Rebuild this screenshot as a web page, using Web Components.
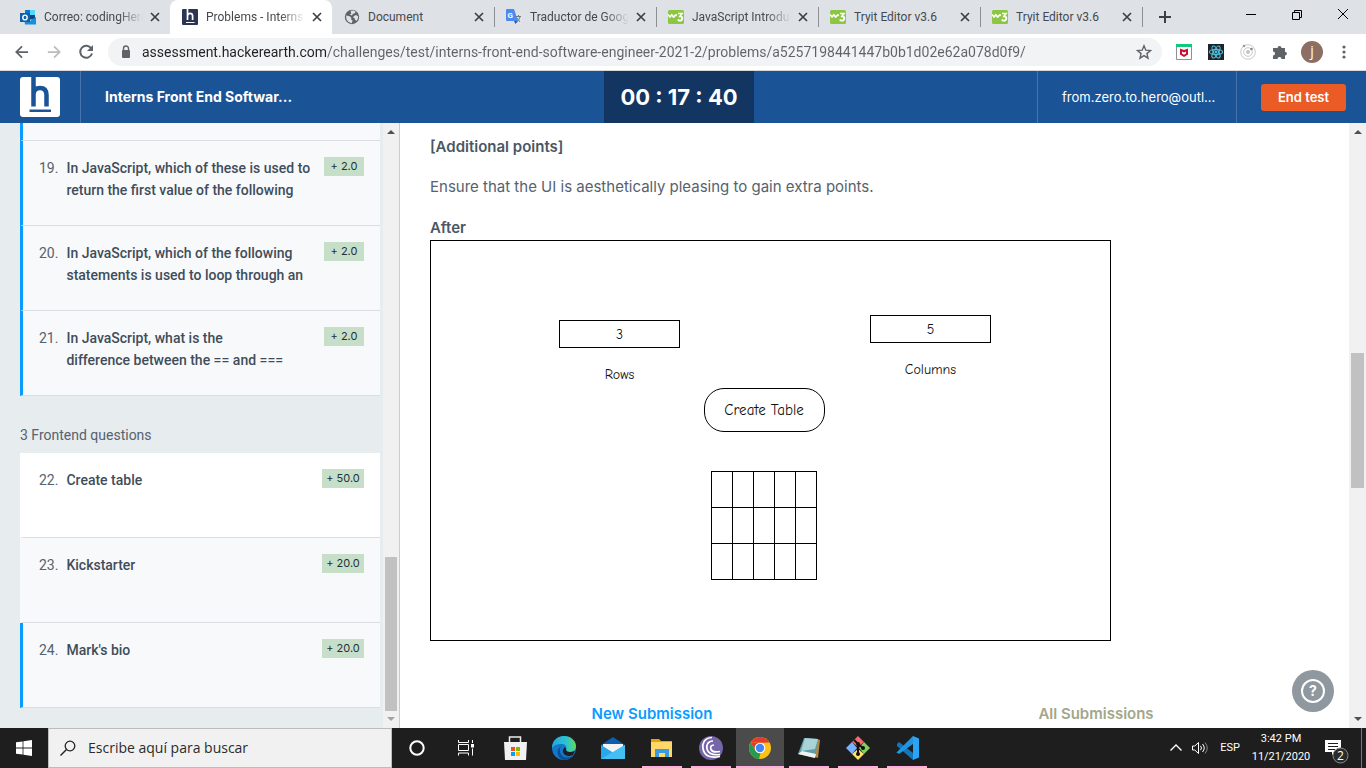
<!DOCTYPE html>
<html lang="en">
<head>
<meta charset="utf-8">
<title>Problems - Interns Front End Software Engineer</title>
<style>
  html, body { margin: 0; height: 100%; }
  body {
    --ui: "Open Sans", sans-serif;
    --chrome: Roboto, sans-serif;
    --page: Inter, sans-serif;
    --hand: "Comic Sans MS", "Comic Neue", "Open Sans", sans-serif;
    font-family: var(--ui);
    overflow: hidden;
  }
</style>
</head>
<body>
<desktop-screen></desktop-screen>

<script>
const define = (name, html, setup) => {
  const template = document.createElement('template');
  template.innerHTML = html;
  customElements.define(name, class extends HTMLElement {
    constructor() {
      super();
      this.attachShadow({ mode: 'open' }).append(template.content.cloneNode(true));
    }
    connectedCallback() { if (setup) setup(this, this.shadowRoot); }
  });
};

const ICONS = {
  outlook: [16, '<path fill="#28a8ea" d="M5 1h10v10H5z"/><path fill="#0078d4" d="M5 1h5v5H5z"/><path fill="#50d9ff" d="M10 1h5v5h-5z"/><path fill="#14447d" d="M10 6h5v4h-5z"/><path fill="#1490df" d="M4 9l6 3 6-4v7.500H5z"/><path fill="#0f5fa8" d="M0 4h10v9H0z"/><ellipse cx="5" cy="8.500" rx="2.200" ry="2.400" fill="none" stroke="#fff" stroke-width="1.400"/>'],
  hmark: [16, '<path fill="#2c3454" d="M1 0h14a1 1 0 0 1 1 1v14a1 1 0 0 1-1 1H1a1 1 0 0 1-1-1V1a1 1 0 0 1 1-1z"/><path fill="none" stroke="#fff" stroke-width="1.700" d="M5.500 0v11M5.500 6.500Q6 4.300 8.200 4.300t2.400 2.500V11"/><path fill="#fff" d="M4 13h8.500v1H4z"/>'],
  globe: [16, '<circle cx="8" cy="8" r="7.200" fill="#5f6368"/><path fill="#dee1e6" d="M2.200 6.500l3.500.800 1.800 1.700-.6 1.300 1.700 1.300-.8 2.600Q3 13.500 2.200 9zM6.500 1.800l3-.2 2 1-.5 1.700-2 .5-1 1.700-2-.8 1.300-1.500zM10 7l2-.900 2.200 1.200q.1 2.500-1.600 4.400L11 11l-.3-1.700L9 8.500z"/>'],
  translate: [16, '<path fill="#e1e3e6" d="M7 4h8q1 0 1 1v10H9z"/><path fill="#4a8af4" d="M1 0h7l4 12H1q-1 0-1-1V1q0-1 1-1z"/><path fill="#2255b8" d="M8 12h4l-2.500 3z"/><text x="1.500" y="9" font-family="Roboto" font-weight="700" font-size="8" fill="#fff">G</text><path fill="none" stroke="#667c89" d="M10 7.500h5M12.500 6v1.500M14 8q-1 3-3 4.500M11 9l3 4"/>'],
  w3: [16, '<rect width="16" height="14" y="1" rx="1.500" fill="#8cc643"/><path fill="none" stroke="#fff" stroke-width="1.700" d="M0 5.500l2 2.500 1.800-2.200L5.500 8l2.200-2L9 6.500M10 4.500h4l-2 2.800q2.500 0 2.300 2.200-.4 2.300-2.700 2.200-1.200-.1-1.800-1.200"/>'],
  close: [16, '<path stroke="#3c4043" stroke-width="1.700" d="M4 4l8 8M12 4l-8 8"/>'],
  plus: [16, '<path stroke="#3c4043" stroke-width="2" d="M8 2v12M2 8h12"/>'],
  min: [16, '<path stroke="#000" d="M3 5.500h10"/>'],
  max: [16, '<path fill="none" stroke="#000" d="M3.500 3.500h7v7h-7zM5.500 3.500v-2h7v7h-2"/>'],
  winclose: [16, '<path stroke="#000" d="M3 0l10 10M13 0L3 10"/>'],
  back: [16, '<path fill="none" stroke="#5f6368" stroke-width="2" d="M15 8H2M8 1.500L1.500 8 8 14.500"/>'],
  forward: [16, '<path fill="none" stroke="#babcbe" stroke-width="2" d="M1 8h13M8 1.500L14.500 8 8 14.500"/>'],
  reload: [16, '<path fill="none" stroke="#5f6368" stroke-width="2" d="M13.300 4.500A6 6 0 1 0 14 9.500"/><path fill="#5f6368" d="M15 1v6H9z"/>'],
  lock: [16, '<rect x="4" y="6" width="8" height="8" rx="1" fill="#5f6368"/><path fill="none" stroke="#5f6368" stroke-width="1.400" d="M5.500 7V4.500a2.500 2.500 0 0 1 5 0V7"/>'],
  star: [16, '<path fill="none" stroke="#5f6368" stroke-width="1.400" d="M8 1.800l1.800 4.400 4.700.4-3.600 3 1.100 4.600L8 11.700l-4 2.500 1.100-4.600-3.600-3 4.700-.4z"/>'],
  mcafee: [16, '<path fill="#fff" stroke="#8d9095" d="M.5.500h15v15H.5z"/><path fill="#12c97b" d="M0 0h16v3H0z"/><path fill="#c8102e" d="M4 4.500l4 1.600 4-1.600v6L8 13l-4-2.500z"/><path fill="#fff" d="M6 7.500l2 .9 2-.9v2L8 10.800 6 9.500z"/>'],
  react: [16, '<path fill="#20232a" d="M0 0h16v16H0z"/><g fill="none" stroke="#53c1de" stroke-width="1.100"><ellipse cx="8" cy="8" rx="6.600" ry="2.500"/><ellipse cx="8" cy="8" rx="6.600" ry="2.500" transform="rotate(60 8 8)"/><ellipse cx="8" cy="8" rx="6.600" ry="2.500" transform="rotate(120 8 8)"/></g><circle cx="8" cy="8" r="1.400" fill="#53c1de"/>'],
  orbit: [16, '<circle cx="8" cy="8" r="7.300" fill="none" stroke="#c9c9c9"/><circle cx="8" cy="8" r="4.300" fill="none" stroke="#c9c9c9"/><circle cx="8" cy="8" r="2" fill="#c4c4c4"/><circle cx="11.500" cy="5" r="1.300" fill="#888"/><circle cx="4" cy="2" r="1.300" fill="#999"/>'],
  puzzle: [16, '<path fill="#5f6368" d="M1 4h4.500a2 2 0 1 1 4 0H13v3.700a1.900 1.900 0 1 1 0 3.800V15H9.500a2 2 0 0 0-4 0H1v-3.500a2 2 0 0 0 0-4z"/>'],
  dots: [16, '<g fill="#5f6368"><circle cx="8" cy="3" r="1.600"/><circle cx="8" cy="8" r="1.600"/><circle cx="8" cy="13" r="1.600"/></g>'],
  logo: [40, '<rect width="40" height="40" rx="3" fill="#fff"/><path fill="none" stroke="#1b5397" stroke-width="4.500" d="M13.500 0v29.500M13.500 17Q14 11 20 11q6.500 0 6.500 7v11.500"/><path fill="#1b5397" d="M9.500 32.500h21.500v2.500h-21.500z"/>'],
  windows: [16, '<path fill="#fff" d="M0 2.300l6.600-.9v6.200H0zM7.400 1.300L16 0v7.600H7.400zM0 8.400h6.600v6.200L0 13.700zM7.400 8.400H16V16l-8.600-1.300z"/>'],
  search: [16, '<circle cx="10" cy="6" r="4.800" fill="none" stroke="#222" stroke-width="1.300"/><path stroke="#222" stroke-width="1.400" d="M6.500 9.500L.500 15.500"/>'],
  cortana: [16, '<circle cx="8" cy="8" r="6.700" fill="none" stroke="#fff" stroke-width="2"/>'],
  taskview: [16, '<path fill="none" stroke="#fff" d="M.5 0v2.500h10V0M.5 15.500V13h10v2.500M.5 4.500h10v6H.5zM14.500 0v3M14.500 8.500v7"/><path fill="#fff" d="M13 4h3v3.500h-3z"/>'],
  store: [24, '<path fill="none" stroke="#ececec" stroke-width="1.500" d="M6.500 6.500V1h11v5.500"/><path fill="#f1f1f1" d="M1 6h23l-1 18H2z"/><path fill="#f25022" d="M8 11h4v4H8z"/><path fill="#7fba00" d="M13 11h4v4h-4z"/><path fill="#00a4ef" d="M8 16h4v4H8z"/><path fill="#ffb900" d="M13 16h4v4h-4z"/>'],
  edge: [24, '<defs><linearGradient id="e"><stop stop-color="#1fa9e0"/><stop offset=".6" stop-color="#2cc5cf"/><stop offset="1" stop-color="#63d85a"/></linearGradient></defs><circle cx="12" cy="12" r="12" fill="#1577c7"/><path fill="url(#e)" d="M0 10.500C1 4 6 0 12 0c7 0 12 5 12 10 0 4-3 6-6.500 6-3 0-4-1-3.500-2 1.500-2.500 0-5.500-3.500-6C6 7.500 2 9 0 12z"/><path fill="#0d4f96" d="M8 12q-1 5 2.500 8t10 0Q17 24 12 24 5 22 5.500 15.500 6 12.500 9 10z"/><path fill="#1e1e1e" d="M14 14q1.500 3.500 9 1l-2 4q-6 2.500-9-1-2.500-3 .5-6.500 2 0 1.500 2.500z"/>'],
  mail: [24, '<path fill="#0a5fae" d="M0 9l12-8 12 8v4H0z"/><path fill="#f4f4f4" d="M2 8h20v9H2z"/><path fill="#28a8ea" d="M0 9l12 7.500L24 9v14H0z"/><path fill="#43bff3" d="M0 23l17-10 7-4v14z"/>'],
  folder: [24, '<path fill="#e5a50a" d="M1 3h8l2 2h11v4H1z"/><path fill="#ffd867" d="M1 6h21v15H1z"/><path fill="#3b9be0" d="M5 13h14v8h-4v-4H9v4H5z"/>'],
  torrent: [24, '<circle cx="12" cy="12" r="12" fill="#7565a9"/><g fill="none" stroke="#fff" stroke-width="1.700"><path d="M13 1.500C5 2 3 8 4 12.500 5 19 10 22.500 21 20.500"/><path d="M14 5C9 5 7 9 8 13c1 4 5 6.500 13 5.500"/><path d="M15 9c-3 0-4 2-3 4.500 1 2 4 3 9 2"/></g>'],
  chrome: [24, '<circle cx="12" cy="12" r="11" fill="#fbc116"/><path fill="#e33b2e" d="M2.500 6.500A11 11 0 0 1 21.500 6.500H12z"/><path fill="#e33b2e" d="M2.500 6.500h19.300L12 7 8 15z"/><path fill="#269b4c" d="M2.500 6.500L8 15l4.500 2L11 23A11 11 0 0 1 2.500 6.500z"/><circle cx="12" cy="12" r="5.300" fill="#fff"/><circle cx="12" cy="12" r="4.200" fill="#4285f4"/>'],
  notepad: [24, '<path fill="#b08a4c" d="M20 3l3 1-2 18-3-1z"/><path fill="#5c9fa9" d="M7 2l14 1-3 19-17-4z"/><path fill="#a9d3d6" d="M8 2l13 1-3 10-14 2z"/><path fill="#f2f2ee" d="M1 18l4-3 14 3-1 4z"/>'],
  git: [24, '<path fill="#f3696c" d="M12 0l6 6-6 5-6-5z"/><path fill="#79b0ff" d="M6 6l5 6-5 6-6-6z"/><path fill="#80d25b" d="M18 6l6 6-6 6-5-6z"/><path fill="#ffe16b" d="M12 13l6 5-6 6-6-6z"/><path fill="none" stroke="#111" stroke-width="2" d="M8 4l4 4v10M12 8l5 4"/><g fill="#111"><circle cx="12" cy="8" r="2"/><circle cx="12" cy="18" r="2"/><circle cx="17" cy="12" r="2"/></g>'],
  code: [24, '<path fill="#0f77c0" d="M2 8l2-2 14 11v7L2 10z"/><path fill="#2196e0" d="M2 16L18 0v8L4 18l-3-2z"/><path fill="#2aa5f5" d="M18 0l6 2.500v19L18 24z"/>'],
  chevron: [16, '<path fill="none" stroke="#fff" stroke-width="1.400" d="M2.500 10.500L8 5l5.500 5.500"/>'],
  volume: [16, '<path fill="none" stroke="#fff" d="M.5 6h2.300L6.500 2.500v11L2.800 10H.5zM8.500 5.800q2 2.200 0 4.400M10.500 4q3.500 4 0 8"/><path fill="none" stroke="#888" d="M13 2.500q4.500 5.500 0 11"/>'],
  notes: [32, '<path fill="#fff" d="M0 8h16v12h-6l-3 3v-3H0z"/><path stroke="#1e1e1e" d="M3 11.500h10M3 14.500h10M3 17.500h7"/><circle cx="15.500" cy="23.500" r="7.500" fill="#2b2b2b" stroke="#8a8a8a"/><text x="15.500" y="28" text-anchor="middle" font-family="Open Sans" font-size="12" fill="#fff">2</text>'],
  help: [24, '<circle cx="12" cy="12" r="11" fill="none" stroke="#fff" stroke-width="2"/><text x="12" y="17" text-anchor="middle" font-family="Inter" font-weight="700" font-size="14" fill="#fff">?</text>']
};

define('app-icon', `<style>:host{display:block;flex:none}svg{display:block;width:100%;height:100%}</style>`, (el, root) => {
  const [size, art] = ICONS[el.getAttribute('name')];
  const width = (el.getAttribute('size') || size) + 'px';
  el.style.width = el.style.height = width;
  root.querySelector('svg')?.remove();
  root.innerHTML += `<svg viewBox="0 0 ${size} ${size}" aria-hidden="true">${art}</svg>`;
});

define('browser-tab', `
<style>
  :host { display: flex; align-items: center; flex: 0 1 162px; min-width: 0; box-sizing: border-box; height: 34px; padding: 0 7px 0 12px; color: #45494d; font: 12px/16px var(--chrome); position: relative; }
  :host([divided])::after { content: ""; position: absolute; right: -1px; top: 7px; width: 1px; height: 20px; background: #8b8e93; }
  :host([active]) { background: #fff; border-radius: 8px 8px 0 0; }
  .title { flex: 1; min-width: 0; margin: 0 4px 0 8px; overflow: hidden; white-space: nowrap; }
  :host([long]) .title { -webkit-mask-image: linear-gradient(90deg, #000 75%, transparent); mask-image: linear-gradient(90deg, #000 75%, transparent); }
  button { border: 0; padding: 0; background: none; }
</style>
<slot name="icon"></slot><span class="title"><slot></slot></span>
<button aria-label="Close tab"><app-icon name="close"></app-icon></button>`);

define('tab-strip', `
<style>
  :host { display: flex; align-items: center; height: 34px; background: #dee1e6; padding-left: 8px; }
  nav { display: flex; flex: 1; min-width: 0; align-items: center; }
  button { border: 0; padding: 0; background: none; display: grid; place-items: center; height: 28px; width: 46px; }
</style>
<nav>
  <browser-tab long><app-icon slot="icon" name="outlook"></app-icon>Correo: codingHero</browser-tab>
  <browser-tab active long><app-icon slot="icon" name="hmark"></app-icon>Problems - Interns</browser-tab>
  <browser-tab divided><app-icon slot="icon" name="globe"></app-icon>Document</browser-tab>
  <browser-tab divided long><app-icon slot="icon" name="translate"></app-icon>Traductor de Goog</browser-tab>
  <browser-tab divided long><app-icon slot="icon" name="w3"></app-icon>JavaScript Introduc</browser-tab>
  <browser-tab divided><app-icon slot="icon" name="w3"></app-icon>Tryit Editor v3.6</browser-tab>
  <browser-tab divided><app-icon slot="icon" name="w3"></app-icon>Tryit Editor v3.6</browser-tab>
  <button aria-label="New tab"><app-icon name="plus"></app-icon></button>
</nav>
<button aria-label="Minimize"><app-icon name="min"></app-icon></button>
<button aria-label="Restore"><app-icon name="max"></app-icon></button>
<button aria-label="Close"><app-icon name="winclose"></app-icon></button>`);

define('browser-toolbar', `
<style>
  :host { display: flex; align-items: center; height: 36px; background: #fff; padding: 0 6px; border-bottom: 1px solid #d5d7da; }
  button { border: 0; padding: 0; background: none; width: 32px; height: 28px; display: grid; place-items: center; }
  form { flex: 1; min-width: 0; display: flex; align-items: center; height: 28px; margin: 0 6px; border-radius: 14px; background: #f1f3f4; padding-left: 10px; }
  input { flex: 1; min-width: 0; border: 0; outline: 0; padding: 0; margin-left: 8px; font: 14px/20px var(--chrome);
    color: transparent; background: linear-gradient(90deg, #202124 184px, #5f6368 184px); -webkit-background-clip: text; background-clip: text; }
  form button { width: 36px; }
  .avatar { width: 22px; height: 22px; border-radius: 50%; background: #8d6e63; color: #fff; font: 14px/20px var(--ui); text-align: center; }
</style>
<button aria-label="Back"><app-icon name="back" size="14"></app-icon></button>
<button aria-label="Forward"><app-icon name="forward" size="14"></app-icon></button>
<button aria-label="Reload"><app-icon name="reload"></app-icon></button>
<form>
  <app-icon name="lock"></app-icon>
  <input aria-label="Address" value="assessment.hackerearth.com/challenges/test/interns-front-end-software-engineer-2021-2/problems/a5257198441447b0b1d02e62a078d0f9/">
  <button type="button" aria-label="Bookmark"><app-icon name="star"></app-icon></button>
</form>
<button aria-label="McAfee"><app-icon name="mcafee"></app-icon></button>
<button aria-label="React tools"><app-icon name="react"></app-icon></button>
<button aria-label="Orbit"><app-icon name="orbit"></app-icon></button>
<button aria-label="Extensions"><app-icon name="puzzle"></app-icon></button>
<button aria-label="Profile"><span class="avatar">j</span></button>
<button aria-label="Menu"><app-icon name="dots"></app-icon></button>`);

define('test-header', `
<style>
  :host { display: grid; grid-template-columns: calc(50% - 79px) 150px 1fr; height: 52px; background: #1b5397; color: #fff; font-family: var(--page); }
  .brand, .account { display: flex; align-items: center; }
  .logo { padding: 0 20px; height: 52px; display: flex; align-items: center; border-right: 1px solid #4673ac; }
  h1 { margin: 0 0 0 24px; font-size: 14px; line-height: 20px; font-weight: 700; }
  time { background: #123562; text-align: center; font-size: 22px; line-height: 52px; font-weight: 700; }
  .account { justify-content: flex-end; }
  .mail { box-sizing: border-box; width: 200px; border: solid #4673ac; border-width: 0 1px; padding-left: 24px; font-size: 13px; line-height: 52px; }
  button { margin: 0 20px 0 24px; width: 85px; height: 27px; border: 0; border-radius: 3px; padding: 0; background: #ea5b25; color: #fff; font: 600 13px/20px var(--page); }
</style>
<div class="brand"><div class="logo"><app-icon name="logo"></app-icon></div><h1>Interns Front End Softwar...</h1></div>
<time>00 : 17 : 40</time>
<div class="account"><span class="mail">from.zero.to.hero@outl...</span><button>End test</button></div>`);

define('scroll-rail', `
<style>
  :host { display: flex; flex-direction: column; align-items: center; width: 17px; flex: none; background: #f1f1f1; }
  i { border: 4px solid transparent; flex: none; }
  .up { border-top: 0; border-bottom-color: #505050; margin: 7px 0 6px; }
  .down { border-bottom: 0; border-top-color: #505050; margin: 6px 0 7px; }
  :host([end]) .down { border-top-color: #a3a3a3; }
  .track { flex: 1; align-self: stretch; display: flex; flex-direction: column; padding: 0 2px; }
  .before { flex: var(--before) 0 0; }
  .thumb { flex: var(--thumb) 0 0; background: #c1c1c1; }
  .after { flex: var(--after) 0 0; }
</style>
<i class="up"></i><div class="track"><div class="before"></div><div class="thumb"></div><div class="after"></div></div><i class="down"></i>`);

define('question-item', `
<style>
  :host { display: flex; align-items: flex-start; box-sizing: border-box; height: 85px; padding: 16px 16px 0; background: #f8f9fb; border: solid #dbdee0; border-width: 0 0 1px 3px; border-left-color: #f8f9fb; color: #3f4d5a; font-size: 14px; line-height: 22px; }
  :host([done]) { border-left-color: #0a9bff; }
  :host([current]) { background: #fff; border-left-color: #fff; }
  :host([tail]) { height: 18px; padding: 0; }
  .number { color: #56626e; }
  .text { flex: 1; margin-left: 8px; font-weight: 500; white-space: nowrap; }
  .badge { flex: none; width: 40px; text-align: center; background: #c7dfc8; color: #24303a; font: 11px/19px var(--page); }
  :host([big]) .badge { width: 42px; }
  :host([tail]) span { display: none; }
</style>
<span class="number"><slot name="number"></slot></span><span class="text"><slot></slot></span><span class="badge"><slot name="points"></slot></span>`);

define('question-sidebar', `
<style>
  :host { display: flex; width: 399px; flex: none; background: #e7ecee; border-right: 1px solid #c9cccf; font-family: var(--chrome); }
  .list { flex: 1; padding-left: 20px; padding-right: 3px; }
  h2 { margin: 0; padding: 28px 0 7px; color: #56626e; font-size: 14px; line-height: 22px; font-weight: 400; }
  scroll-rail { width: 16px; --before: 418; --thumb: 155; --after: 0; }
</style>
<div class="list">
  <question-item done tail></question-item>
  <question-item done><span slot="number">19.</span>In JavaScript, which of these is used to<br>return the first value of the following<span slot="points">+ 2.0</span></question-item>
  <question-item done><span slot="number">20.</span>In JavaScript, which of the following<br>statements is used to loop through an<span slot="points">+ 2.0</span></question-item>
  <question-item done><span slot="number">21.</span>In JavaScript, what is the<br>difference between the == and ===<span slot="points">+ 2.0</span></question-item>
  <h2>3 Frontend questions</h2>
  <question-item current big><span slot="number">22.</span>Create table<span slot="points">+ 50.0</span></question-item>
  <question-item big><span slot="number">23.</span>Kickstarter<span slot="points">+ 20.0</span></question-item>
  <question-item done big><span slot="number">24.</span>Mark's bio<span slot="points">+ 20.0</span></question-item>
</div>
<scroll-rail end></scroll-rail>`);

define('mock-field', `
<style>
  :host { display: flex; flex-direction: column; align-items: center; width: 121px; }
  input { box-sizing: border-box; width: 100%; height: 28px; border: 1px solid #000; padding: 0; background: #fff; text-align: center; font: 14px/20px var(--hand); color: #111; }
  label { margin-top: 17px; font-size: 14px; line-height: 20px; }
</style>
<input id="f"><label for="f"></label>`, (el, root) => {
  root.querySelector('input').value = el.getAttribute('value');
  root.querySelector('label').textContent = el.getAttribute('label');
});

define('table-mock', `
<style>
  :host { display: block; box-sizing: border-box; max-width: 681px; height: 401px; border: 1px solid #000; padding: 74px 119px 0 128px; font-family: var(--hand); color: #111; }
  .fields { display: flex; justify-content: space-between; }
  .rows { margin-top: 5px; }
  .center { display: flex; flex-direction: column; align-items: center; padding-right: 22px; }
  button { width: 121px; height: 44px; margin-top: 3px; border: 1px solid #000; border-radius: 20px; padding: 0; background: #fff; color: #111; font: 15px/20px var(--hand); }
  table { margin-top: 39px; border-collapse: collapse; }
  td { box-sizing: border-box; width: 21px; height: 36px; padding: 0; border: 1px solid #000; }
</style>
<div class="fields"><mock-field class="rows" value="3" label="Rows"></mock-field><mock-field value="5" label="Columns"></mock-field></div>
<div class="center"><button>Create Table</button>
<table aria-label="Created table"><tr><td></td><td></td><td></td><td></td><td></td></tr><tr><td></td><td></td><td></td><td></td><td></td></tr><tr><td></td><td></td><td></td><td></td><td></td></tr></table></div>`);

define('problem-view', `
<style>
  :host { display: flex; flex: 1; min-width: 0; background: #fff; position: relative; color: #56626e; font-family: var(--page); }
  main { flex: 1; min-width: 0; padding: 12px 31px 0 30px; overflow: hidden; }
  h3, p { margin: 0; font-size: 15px; line-height: 24px; }
  h3 { font-weight: 600; color: #4a5763; }
  p { margin: 16px 0; }
  h3.after { line-height: 25px; }
  nav { display: grid; grid-template-columns: 1fr 1fr; text-align: center; margin-top: 61px; font-size: 15px; line-height: 24px; font-weight: 600; }
  a { text-decoration: none; color: #a2a78c; }
  a.on { color: #0a9bff; }
  .help { position: absolute; right: 32px; bottom: 16px; width: 42px; height: 42px; border: 0; border-radius: 50%; padding: 0; background: #8f979f; display: grid; place-items: center; }
  scroll-rail { --before: 213; --thumb: 135; --after: 223; }
</style>
<main>
  <h3>[Additional points]</h3>
  <p>Ensure that the UI is aesthetically pleasing to gain extra points.</p>
  <h3 class="after">After</h3>
  <table-mock></table-mock>
  <nav><a class="on" href="#new">New Submission</a><a href="#all">All Submissions</a></nav>
</main>
<scroll-rail></scroll-rail>
<button class="help" aria-label="Help"><app-icon name="help"></app-icon></button>`);

define('task-button', `
<style>
  :host { display: block; }
  button { box-sizing: border-box; width: 48px; height: 40px; border: 0; padding: 0; background: none; display: grid; place-items: center; }
  :host([open]) button { background: linear-gradient(#ffb0da, #ffb0da) bottom / 40px 2px no-repeat; }
  :host([active]) button { background: linear-gradient(#ffb0da, #ffb0da) bottom / 48px 2px no-repeat #4b4b4b; }
</style>
<button><slot></slot></button>`, (el, root) => root.querySelector('button').setAttribute('aria-label', el.getAttribute('label')));

define('task-bar', `
<style>
  :host { display: flex; align-items: center; height: 40px; background: #1e1e1e; color: #fff; font: 11px/18px var(--chrome); }
  .search { box-sizing: border-box; flex: 0 1 344px; height: 40px; display: flex; align-items: center; gap: 12px; padding-left: 11px; background: #f1f1f1; border: 1px solid #bdbdbd; }
  input { flex: 1; min-width: 0; border: 0; outline: 0; padding: 0; background: none; font: 14px/20px var(--ui); }
  input::placeholder { color: #2b2b2b; opacity: 1; }
  .apps { display: flex; flex: 1; gap: 1px; padding-left: 1px; }
  .tray { display: flex; align-items: center; height: 40px; }
  .tray app-icon { margin-right: 8px; }
  .lang { margin: 0 11px 0 4px; }
  .clock { text-align: center; width: 60px; white-space: nowrap; }
  .tray .notes { margin: 0 4px 0 14px; }
  .peek { width: 4px; height: 40px; border-left: 1px solid #777; }
</style>
<task-button label="Start"><app-icon name="windows"></app-icon></task-button>
<label class="search"><app-icon name="search"></app-icon><input aria-label="Search" placeholder="Escribe aquí para buscar"></label>
<div class="apps">
  <task-button label="Cortana"><app-icon name="cortana"></app-icon></task-button>
  <task-button label="Task view"><app-icon name="taskview"></app-icon></task-button>
  <task-button label="Store"><app-icon name="store"></app-icon></task-button>
  <task-button label="Edge"><app-icon name="edge"></app-icon></task-button>
  <task-button label="Mail"><app-icon name="mail"></app-icon></task-button>
  <task-button label="Files" open><app-icon name="folder"></app-icon></task-button>
  <task-button label="BitTorrent" open><app-icon name="torrent"></app-icon></task-button>
  <task-button label="Chrome" active><app-icon name="chrome"></app-icon></task-button>
  <task-button label="Notepad" open><app-icon name="notepad"></app-icon></task-button>
  <task-button label="Git" open><app-icon name="git"></app-icon></task-button>
  <task-button label="Code" open><app-icon name="code"></app-icon></task-button>
</div>
<div class="tray">
  <app-icon name="chevron"></app-icon><app-icon name="volume"></app-icon>
  <span class="lang">ESP</span><span class="clock">3:42 PM<br>11/21/2020</span>
  <app-icon class="notes" name="notes"></app-icon><span class="peek"></span>
</div>`);

define('desktop-screen', `
<style>
  :host { display: flex; flex-direction: column; height: 100vh; }
  tab-strip, browser-toolbar, test-header, task-bar { flex: none; }
  .body { flex: 1; display: flex; min-height: 0; overflow: hidden; }
</style>
<tab-strip></tab-strip>
<browser-toolbar></browser-toolbar>
<test-header></test-header>
<div class="body"><question-sidebar></question-sidebar><problem-view></problem-view></div>
<task-bar></task-bar>`);
</script>
</body>
</html>
